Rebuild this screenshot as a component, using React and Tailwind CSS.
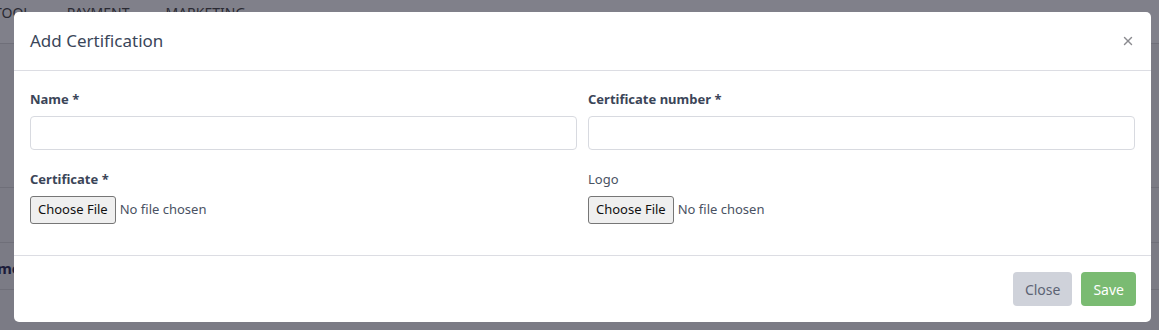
import { X } from 'lucide-react'

function Label({ children, required, bold = true }) {
  return (
    <label className={`block text-[13px] leading-[18px] mb-[8px] ${bold ? 'font-bold text-[#3b4558]' : 'font-normal text-[#4a5263]'}`}>
      {children}
      {required && <span> *</span>}
    </label>
  )
}

function FileField() {
  return (
    <div className="flex items-center gap-[4px]">
      <span className="inline-flex items-center h-[28px] px-[7px] border border-[#767676] rounded-[3px] bg-[#efefef] text-[13px] text-[#111]">
        Choose File
      </span>
      <span className="text-[13px] text-[#4a5263]">No file chosen</span>
    </div>
  )
}

export default function App() {
  return (
    <div className="relative w-[1159px] h-[330px] overflow-hidden bg-[#7b7b85] font-['Noto_Sans',sans-serif]">
      {/* dimmed page behind */}
      <div className="flex flex-col">
        <div className="h-[44px] bg-[#80808a] border-b border-[#6f6f79] flex items-start gap-[36px] -ml-[6px] pt-[4px] text-[14px] leading-[18px] text-[#2a2a33]">
          <span>TOOL</span>
          <span>PAYMENT</span>
          <span>MARKETING</span>
        </div>
        <div className="h-[144px] border-b border-[#6f6f79]" />
        <div className="h-[55px] border-b border-[#6f6f79]" />
        <div className="h-[47px] border-b border-[#6f6f79] flex items-center pt-[4px] text-[15px] font-bold text-[#1c1c3a] -ml-[24px]">
          <span>Name</span>
        </div>
      </div>

      <div className="absolute left-[14px] top-[12px] w-[1137px] h-[310px] bg-white rounded-[5px] flex flex-col">
        <div className="h-[59px] flex items-center justify-between pl-[16px] pr-[16px] border-b border-[#dcdde3]">
          <h5 className="text-[17px] text-[#3a4659] font-normal">Add Certification</h5>
          <X size={14} strokeWidth={2.5} className="text-[#8b8b90]" />
        </div>
        <div className="flex-1 px-[16px] pt-[19px] grid grid-cols-2 gap-x-[11px] content-start">
          <div>
            <Label required>Name</Label>
            <input className="block w-full h-[34px] border border-[#d8dae0] rounded-[4px]" />
          </div>
          <div>
            <Label required>Certificate number</Label>
            <input className="block w-full h-[34px] border border-[#d8dae0] rounded-[4px]" />
          </div>
          <div className="mt-[20px]">
            <Label required>Certificate</Label>
            <FileField />
          </div>
          <div className="mt-[20px]">
            <Label bold={false}>Logo</Label>
            <FileField />
          </div>
        </div>
        <div className="h-[67px] border-t border-[#dcdde3] flex items-center justify-end gap-[9px] pr-[15px]">
          <button className="h-[34px] px-[12px] rounded-[4px] bg-[#cfd2da] text-[14px] text-[#5c6374]">Close</button>
          <button className="h-[34px] px-[12px] rounded-[4px] bg-[#7abb72] text-[14px] text-white">Save</button>
        </div>
      </div>
    </div>
  )
}
